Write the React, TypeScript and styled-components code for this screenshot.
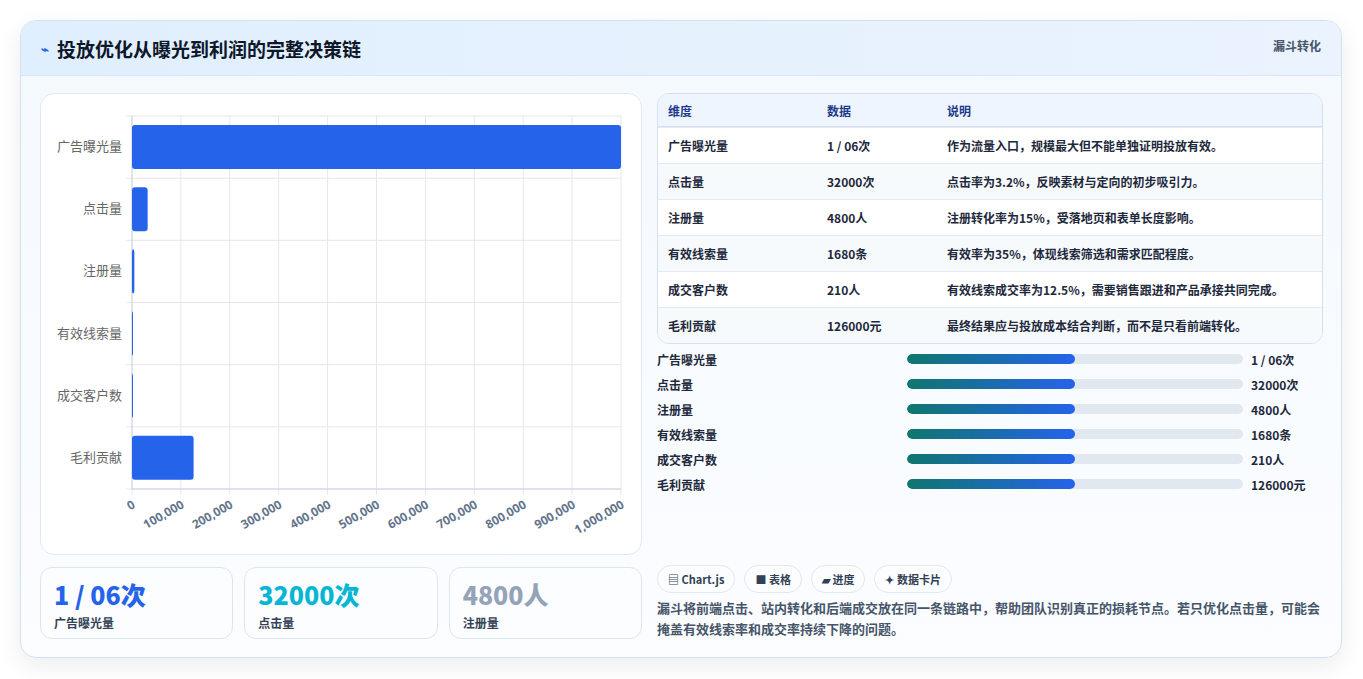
import React from "react";
import styled, { createGlobalStyle } from "styled-components";

const G = createGlobalStyle`
  body{margin:0;background:#fff;font-family:"Noto Sans CJK SC","Noto Sans",sans-serif;}
`;
const Page = styled.div`padding:20px 21px 22px 20px;`;
const Card = styled.div`
  border:1px solid #cfe3f3;border-radius:16px;overflow:hidden;
  background:linear-gradient(180deg,#f4f9ff,#fbfdff);
  box-shadow:0 8px 24px rgba(15,23,42,.08);
`;
const Header = styled.div`
  height:54px;display:flex;align-items:center;justify-content:space-between;
  padding:0 20px;background:linear-gradient(90deg,#e0effd,#eaf3fe);
  border-bottom:1px solid #d6e7f7;
`;
const Title = styled.h1`margin:0;font-size:19px;font-weight:700;color:#0f172a;display:flex;align-items:center;gap:8px;`;
const Tag = styled.span`font-size:12px;font-weight:700;color:#475569;align-self:flex-start;margin-top:16px;`;
const Body = styled.div`display:grid;grid-template-columns:602px 666px;gap:15px;padding:17px 19px 18px 19px;`;
const Col = styled.div`display:flex;flex-direction:column;gap:12px;`;
const ChartBox = styled.div`height:460px;background:#fff;border:1px solid #e2e8f0;border-radius:14px;`;
const Stats = styled.div`display:grid;grid-template-columns:repeat(3,1fr);gap:11px;`;
const Stat = styled.div`height:72px;box-sizing:border-box;border:1px solid #dde6f0;border-radius:12px;background:#fbfdff;padding:10px 13px;`;
const StatVal = styled.div<{c:string}>`font-size:25px;font-weight:800;color:${p=>p.c};line-height:32px;`;
const StatLbl = styled.div`font-size:12px;font-weight:700;color:#334155;margin-top:4px;`;
const Table = styled.div`border:1px solid #d5e0ec;border-radius:12px;overflow:hidden;background:#fff;`;
const Row = styled.div<{h?:boolean;alt?:boolean}>`
  display:grid;grid-template-columns:159px 120px 1fr;align-items:center;padding:0 10px;
  height:${p=>p.h?32:35}px;font-size:12px;font-weight:${p=>p.h?700:600};
  color:${p=>p.h?"#1e3a8a":"#1e293b"};
  background:${p=>p.h?"#eef5ff":p.alt?"#f7fafd":"#fff"};
  border-top:${p=>p.h?"none":"1px solid #e5ebf2"};
  ${p=>p.h?"border-bottom:1px solid #d5e0ec;":""}
`;
const Bars = styled.div`display:flex;flex-direction:column;gap:7px;margin-top:6px;`;
const BarRow = styled.div`display:grid;grid-template-columns:250px 344px 1fr;gap:0;align-items:center;height:18px;font-size:12px;font-weight:700;color:#1e293b;`;
const Track = styled.div`height:10px;border-radius:5px;background:#e2e8f0;overflow:hidden;margin-right:8px;`;
const Fill = styled.div`height:100%;border-radius:5px;background:linear-gradient(90deg,#0f766e,#2563eb);`;
const Spacer = styled.div`flex:1;`;
const Chips = styled.div`display:flex;gap:9px;`;
const Chip = styled.span`height:28px;box-sizing:border-box;padding:0 10px;display:inline-flex;align-items:center;gap:4px;border:1px solid #e2e8f0;border-radius:14px;background:#fbfdff;font-size:11px;font-weight:700;color:#334155;`;
const Para = styled.p`margin:4px 0 0;font-size:13px;line-height:21px;font-weight:600;color:#475569;`;

const labels=["广告曝光量","点击量","注册量","有效线索量","成交客户数","毛利贡献"];
const vals=[1000000,32000,4800,1680,210,126000];
const rows=[
 ["广告曝光量","1 / 06次","作为流量入口，规模最大但不能单独证明投放有效。"],
 ["点击量","32000次","点击率为3.2%，反映素材与定向的初步吸引力。"],
 ["注册量","4800人","注册转化率为15%，受落地页和表单长度影响。"],
 ["有效线索量","1680条","有效率为35%，体现线索筛选和需求匹配程度。"],
 ["成交客户数","210人","有效线索成交率为12.5%，需要销售跟进和产品承接共同完成。"],
 ["毛利贡献","126000元","最终结果应与投放成本结合判断，而不是只看前端转化。"],
];

function Chart(){
  const L=91,T=22,R=580,B=395,W=R-L,rh=(B-T)/6;
  return <svg width="602" height="460">
    {Array.from({length:11}).map((_,i)=>{const x=L+W*i/10;return <g key={i}>
      <line x1={x} y1={T} x2={x} y2={B+6} stroke="#e5e7eb"/>
      <text transform={`translate(${x+4},${B+18}) rotate(-30)`} textAnchor="end" fontSize="12" fontWeight="700" fill="#64748b" fontFamily="Noto Sans">{i===0?"0":(i*100000).toLocaleString("en-US")}</text>
    </g>})}
    {Array.from({length:7}).map((_,i)=><line key={i} x1={L-6} x2={R} y1={T+rh*i} y2={T+rh*i} stroke="#e5e7eb"/>)}
    <line x1={L} x2={L} y1={T} y2={B} stroke="#cbd5e1"/>
    <line x1={L} x2={R} y1={B} y2={B} stroke="#cbd5e1"/>
    {labels.map((l,i)=>{const y=T+rh*i;return <g key={l}>
      <text x={L-10} y={y+rh/2+4} textAnchor="end" fontSize="13" fill="#666" fontFamily="Noto Sans CJK SC">{l}</text>
      <rect x={L} y={y+9} width={Math.max(1,W*vals[i]/1e6)} height={44} rx="3" fill="#2563eb"/>
    </g>})}
  </svg>;
}

export default function App(){
  return <Page><G/><Card>
    <Header><Title><span style={{color:"#2563eb",fontSize:13}}>⌁</span>投放优化从曝光到利润的完整决策链</Title><Tag>漏斗转化</Tag></Header>
    <Body>
      <Col>
        <ChartBox><Chart/></ChartBox>
        <Stats>
          <Stat><StatVal c="#2563eb">1 / 06次</StatVal><StatLbl>广告曝光量</StatLbl></Stat>
          <Stat><StatVal c="#06b6d4">32000次</StatVal><StatLbl>点击量</StatLbl></Stat>
          <Stat><StatVal c="#94a3b8">4800人</StatVal><StatLbl>注册量</StatLbl></Stat>
        </Stats>
      </Col>
      <Col style={{gap:0}}>
        <Table>
          <Row h><span>维度</span><span>数据</span><span>说明</span></Row>
          {rows.map((r,i)=><Row key={i} alt={i%2===1}><span>{r[0]}</span><span>{r[1]}</span><span>{r[2]}</span></Row>)}
        </Table>
        <Bars>{rows.map(r=><BarRow key={r[0]}><span>{r[0]}</span><Track><Fill style={{width:"50%"}}/></Track><span>{r[1]}</span></BarRow>)}</Bars>
        <Spacer/>
        <Chips><Chip>▤ Chart.js</Chip><Chip>■ 表格</Chip><Chip>▰ 进度</Chip><Chip>✦ 数据卡片</Chip></Chips>
        <Para>漏斗将前端点击、站内转化和后端成交放在同一条链路中，帮助团队识别真正的损耗节点。若只优化点击量，可能会掩盖有效线索率和成交率持续下降的问题。</Para>
      </Col>
    </Body>
  </Card></Page>;
}
